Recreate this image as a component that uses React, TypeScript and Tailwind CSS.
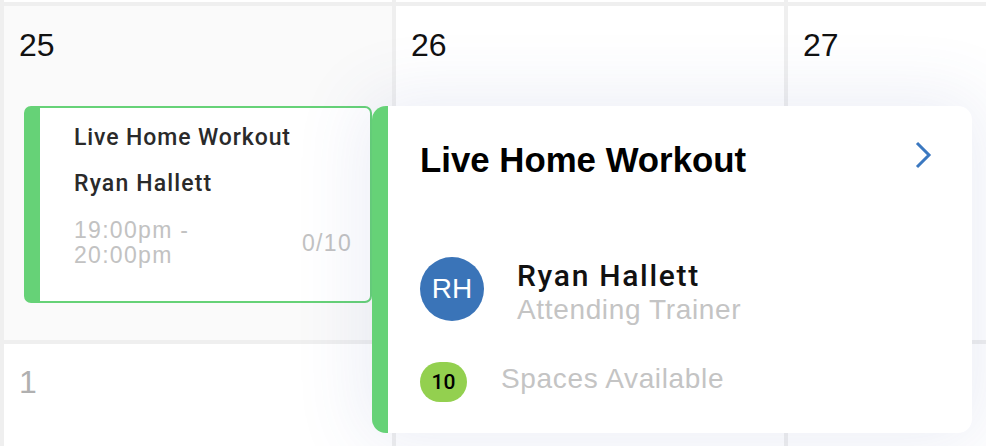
export default function App() {
  const num = "pl-[15px] text-[32px] leading-[32px] text-[#111111]";
  const med = "font-['Roboto',Arial,sans-serif] font-medium";
  return (
    <div className="relative w-[986px] h-[446px] overflow-hidden bg-white font-['Liberation_Sans',Arial,sans-serif]">
      <div className="grid w-[1176px] grid-cols-[388px_388px_388px] grid-rows-[2px_334px_200px] gap-[4px] bg-[#efefef] pl-[4px]">
        <div className="bg-white" />
        <div className="bg-white" />
        <div className="bg-white" />

        <div className="bg-[#fafafa] pt-[23px]">
          <div className={num}>25</div>
          <div className="mx-[20px] mt-[45px] h-[197px] rounded-[7px] border-2 border-l-[16px] border-[#66d277] bg-white pl-[34px] pr-[18px] pt-[16px]">
            <div className={`${med} text-[23px] leading-[28px] tracking-[0.9px] text-[#2a2a2a]`}>Live Home Workout</div>
            <div className={`${med} mt-[18px] text-[23px] leading-[28px] tracking-[1.15px] text-[#2a2a2a]`}>Ryan Hallett</div>
            <div className="mt-[20px] flex items-center justify-between text-[23px] leading-[25px] tracking-[1.3px] text-[#c2c2c2]">
              <div className="w-[140px]">19:00pm - 20:00pm</div>
              <div>0/10</div>
            </div>
          </div>
        </div>
        <div className="bg-white pt-[23px]">
          <div className={num}>26</div>
        </div>
        <div className="bg-white pt-[23px]">
          <div className={num}>27</div>
        </div>

        <div className="bg-white pt-[22px]">
          <div className="pl-[15px] text-[32px] leading-[32px] text-[#b0b0b0]">1</div>
        </div>
        <div className="bg-white pt-[22px]">
          <div className={num}>2</div>
        </div>
        <div className="bg-white pt-[22px]">
          <div className={num}>3</div>
        </div>
      </div>

      <div className="absolute left-[372px] top-[106px] h-[327px] w-[600px] rounded-[14px] border-l-[16px] border-[#66d277] bg-white pl-[32px] pr-[40px] pt-[34px] shadow-[0_0_70px_10px_rgba(70,90,170,0.10)]">
        <div className="flex items-start justify-between">
          <div className="text-[34.8px] font-bold leading-[40px] text-black">Live Home Workout</div>
          <svg className="mt-[1px]" width="18" height="28" viewBox="0 0 18 28">
            <polyline points="3,2 15,14 3,26" fill="none" stroke="#3b78c0" strokeWidth="3" />
          </svg>
        </div>
        <div className="mt-[77px] flex h-16 items-start">
          <div className="flex h-16 w-16 shrink-0 items-center justify-center rounded-full bg-[#3a74b8] text-[28px] leading-none text-white">
            RH
          </div>
          <div className="ml-[33px] mt-[2px]">
            <div className={`${med} text-[30px] leading-[34px] tracking-[1.7px] text-[#111111]`}>Ryan Hallett</div>
            <div className="text-[28px] leading-[34px] tracking-[0.65px] text-[#c4c4c4]">Attending Trainer</div>
          </div>
        </div>
        <div className="mt-[41px] flex items-start">
          <div className={`${med} flex h-[40px] w-[47px] shrink-0 items-center justify-center rounded-full bg-[#93d04f] text-[21px] leading-none text-black`}>
            10
          </div>
          <div className="ml-[34px] text-[28px] leading-[34px] tracking-[0.65px] text-[#c4c4c4]">Spaces Available</div>
        </div>
      </div>
    </div>
  );
}
